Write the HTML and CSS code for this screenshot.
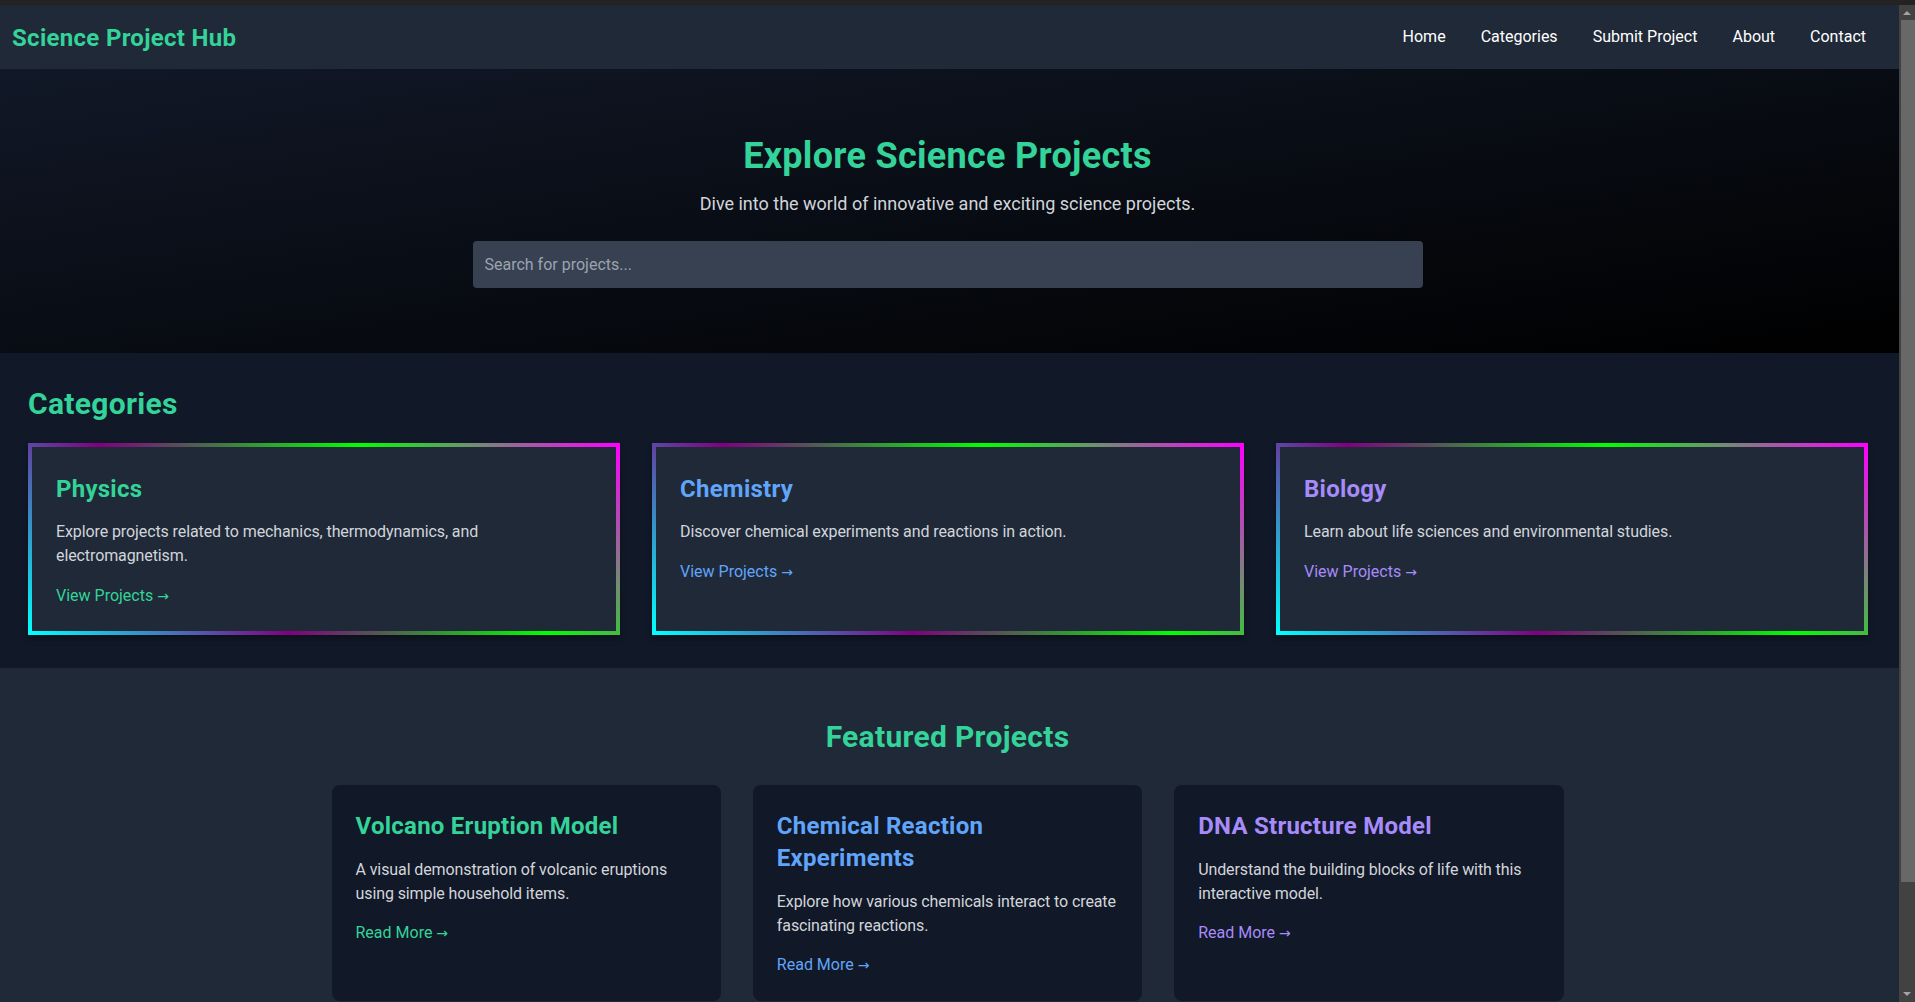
FILE: index.html
```html
<!DOCTYPE html>
<html lang="en">
<head>
<meta charset="utf-8">
<title>Science Project Hub</title>
<link rel="stylesheet" href="styles.css">
</head>
<body>
<div class="topstrip"></div>
<header class="site-header">
  <div class="logo">Science Project Hub</div>
  <nav class="nav">
    <a href="#">Home</a>
    <a href="#">Categories</a>
    <a href="#">Submit Project</a>
    <a href="#">About</a>
    <a href="#">Contact</a>
  </nav>
</header>
<section class="hero">
  <h1 class="hero-title">Explore Science Projects</h1>
  <p class="hero-sub">Dive into the world of innovative and exciting science projects.</p>
  <input class="search" type="text" placeholder="Search for projects...">
</section>
<section class="categories">
  <h2 class="section-title">Categories</h2>
  <div class="cat-grid">
    <div class="cat-card">
      <h3 class="card-title green">Physics</h3>
      <p class="card-text">Explore projects related to mechanics, thermodynamics, and electromagnetism.</p>
      <a class="card-link green" href="#">View Projects <span class="arrow">→</span></a>
    </div>
    <div class="cat-card">
      <h3 class="card-title blue">Chemistry</h3>
      <p class="card-text">Discover chemical experiments and reactions in action.</p>
      <a class="card-link blue" href="#">View Projects <span class="arrow">→</span></a>
    </div>
    <div class="cat-card">
      <h3 class="card-title purple">Biology</h3>
      <p class="card-text">Learn about life sciences and environmental studies.</p>
      <a class="card-link purple" href="#">View Projects <span class="arrow">→</span></a>
    </div>
  </div>
</section>
<section class="featured">
  <h2 class="section-title center">Featured Projects</h2>
  <div class="feat-grid">
    <div class="feat-card">
      <h3 class="card-title green">Volcano Eruption Model</h3>
      <p class="card-text">A visual demonstration of volcanic eruptions using simple household items.</p>
      <a class="card-link green" href="#">Read More <span class="arrow">→</span></a>
    </div>
    <div class="feat-card">
      <h3 class="card-title blue">Chemical Reaction Experiments</h3>
      <p class="card-text">Explore how various chemicals interact to create fascinating reactions.</p>
      <a class="card-link blue" href="#">Read More <span class="arrow">→</span></a>
    </div>
    <div class="feat-card">
      <h3 class="card-title purple">DNA Structure Model</h3>
      <p class="card-text">Understand the building blocks of life with this interactive model.</p>
      <a class="card-link purple" href="#">Read More <span class="arrow">→</span></a>
    </div>
  </div>
</section>
<footer class="site-footer">
  <p>&copy; 2024 Science Project Hub. All rights reserved.</p>
</footer>
<div class="scrollbar" aria-hidden="true">
  <div class="sb-arrow sb-up"></div>
  <div class="sb-track"><div class="sb-thumb"></div></div>
  <div class="sb-arrow sb-down"></div>
</div>
</body>
</html>
```

FILE: styles.css
```css
* { box-sizing: border-box; }
html, body { margin: 0; padding: 0; }
body {
  background: #111827;
  color: #fff;
  font-family: "Roboto", "Liberation Sans", sans-serif;
  font-size: 16px;
  line-height: 1.5;
  padding-right: 16px;
}

.topstrip { height: 5px; background: #232323; margin-right: -16px; }
.site-header {
  background: #1f2937;
  height: 64px;
  display: flex;
  align-items: center;
  justify-content: space-between;
  padding: 0 33px 0 12px;
}
.logo { color: #34d399; font-size: 24px; font-weight: 700; line-height: 32px; letter-spacing: 0.3px; padding-top: 2px; }
.nav { display: flex; gap: 35px; }
.nav a { color: #fff; text-decoration: none; font-size: 16px; }

.hero {
  background: linear-gradient(to bottom right, #111827, #000);
  padding: 67px 4px 65px 0;
  text-align: center;
}
.hero-title { margin: 0 0 14px; font-size: 36px; line-height: 40px; font-weight: 700; color: #34d399; letter-spacing: 0.3px; }
.hero-sub { margin: 0 0 23px; font-size: 18px; line-height: 28px; color: #d1d5db; }
.search {
  display: block;
  width: 950px;
  margin: 0 auto;
  padding: 12px;
  height: 47px;
  border: none;
  border-radius: 4px;
  background: #374151;
  color: #fff;
  font-family: inherit;
  font-size: 16px;
  outline: none;
}
.search::placeholder { color: #9ca3af; }

.categories { background: #111827; padding: 33px 31px 33px 28px; }
.section-title { margin: 0 0 21px; font-size: 30px; line-height: 36px; font-weight: 700; color: #34d399; letter-spacing: 0.3px; }
.section-title.center { text-align: center; margin-bottom: 30px; }
.cat-grid { display: grid; grid-template-columns: repeat(3, 1fr); gap: 32px; }
.cat-card {
  background: #1f2937;
  border: 4px solid transparent;
  border-image: linear-gradient(45deg, #00ffff, #800080, #00ff00, #ff00ff) 1;
  padding: 26px 24px 23px;
  box-shadow: 0 4px 6px rgba(0, 0, 0, 0.3);
}
.cat-card .card-title { margin-bottom: 15px; }
.card-title { margin: 0 0 16px; font-size: 24px; line-height: 32px; font-weight: 700; letter-spacing: 0.25px; }
.card-text { margin: 0 0 16px; color: #d1d5db; font-size: 16px; line-height: 24px; letter-spacing: -0.1px; }
.feat-card .card-text { margin-bottom: 15px; }
.card-link { text-decoration: none; font-size: 16px; line-height: 24px; }
.arrow { font-family: "DejaVu Sans", sans-serif; font-size: 14px; }
.green { color: #34d399; }
.blue { color: #60a5fa; }
.purple { color: #a78bfa; }

.featured { background: #1f2937; padding: 51px 4px 48px 0; }
.feat-grid {
  max-width: 1280px;
  margin: 0 auto;
  padding: 0 24px;
  display: grid;
  grid-template-columns: repeat(3, 1fr);
  gap: 32px;
}
.feat-card { background: #111827; border-radius: 8px; padding: 25px 24px 24px; }
.site-footer { background: #111827; padding: 24px; text-align: center; color: #9ca3af; }
.site-footer p { margin: 0; }

.scrollbar {
  position: fixed;
  top: 5px;
  right: 0;
  bottom: 0;
  width: 16px;
  background: #424242;
  display: flex;
  flex-direction: column;
}
.sb-arrow { height: 15px; flex: none; position: relative; }
.sb-up::after, .sb-down::after {
  content: "";
  position: absolute;
  left: 4px;
  border-left: 4px solid transparent;
  border-right: 4px solid transparent;
}
.sb-up::after { top: 6px; border-bottom: 4px solid #a3a3a3; }
.sb-down::after { bottom: 6px; border-top: 4px solid #a3a3a3; }
.sb-track { flex: 1; padding: 0 0 0 2px; }
.sb-thumb { height: 862px; background: #686868; }
```
